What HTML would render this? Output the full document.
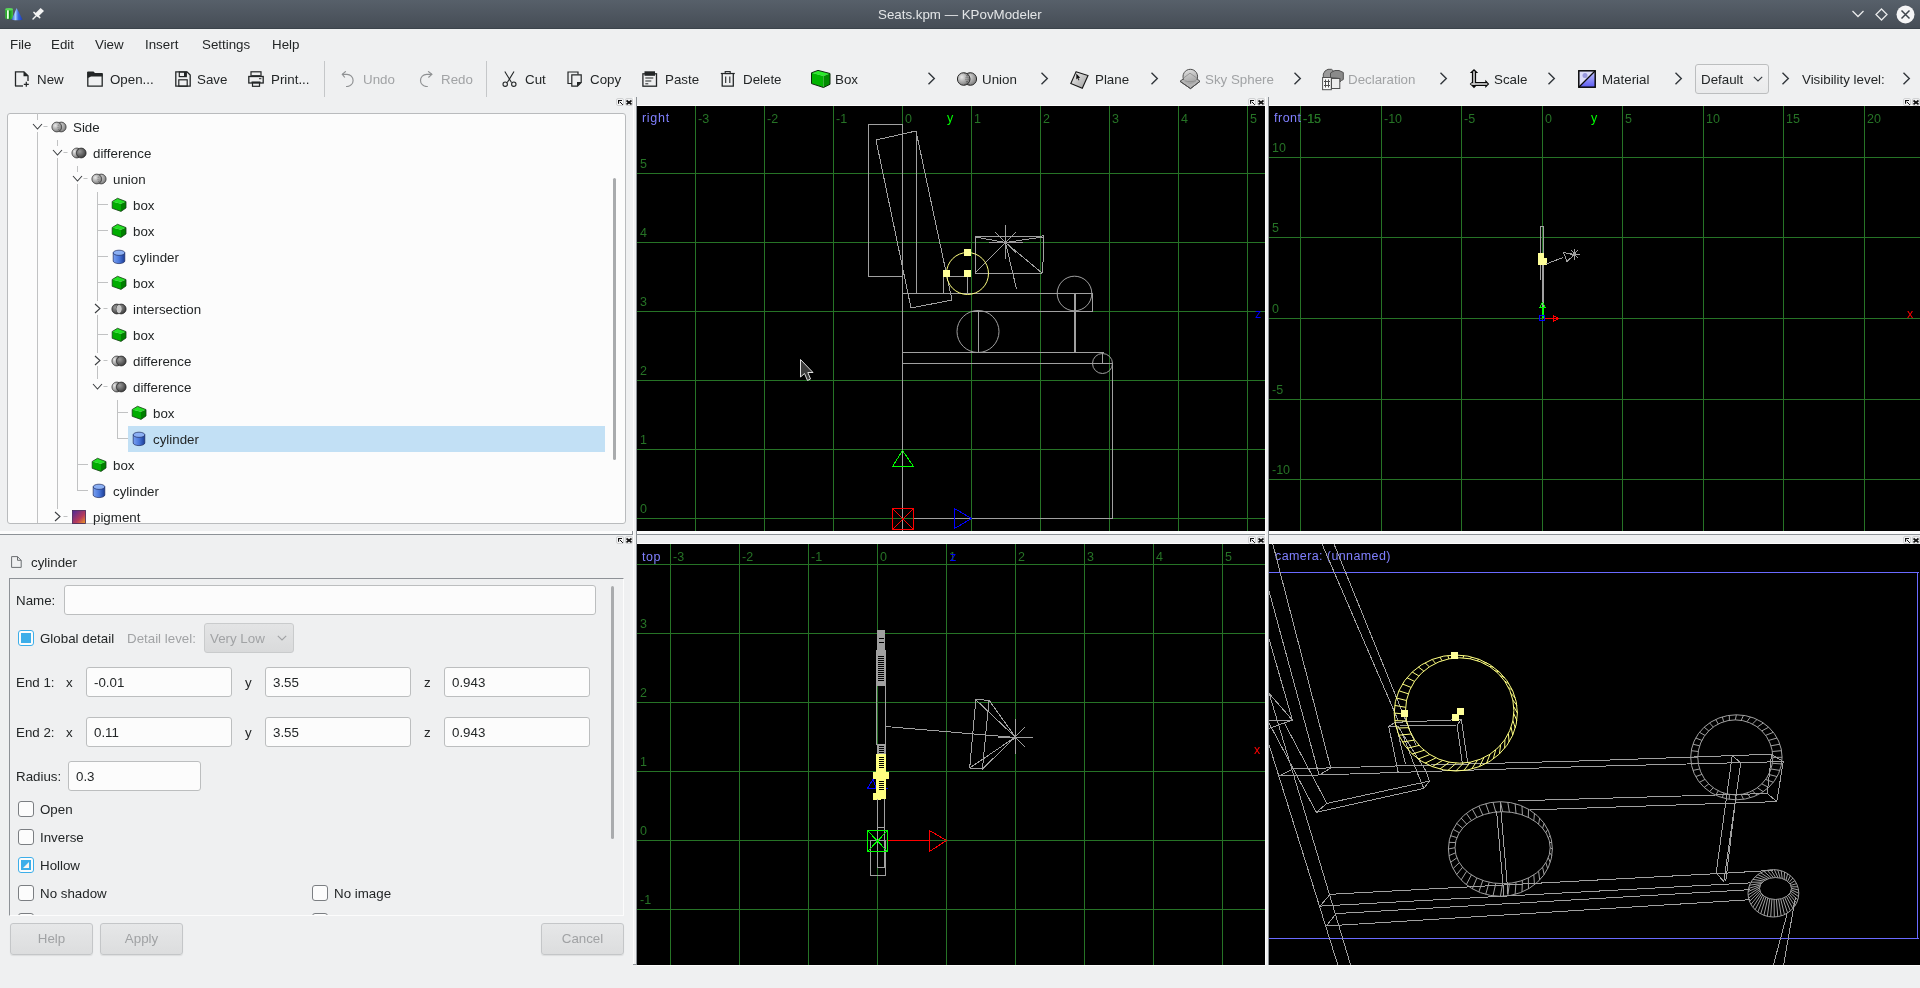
<!DOCTYPE html>
<html><head><meta charset="utf-8">
<style>
*{box-sizing:border-box;margin:0;padding:0}
html,body{width:1920px;height:988px;overflow:hidden;background:#eff0f1;font-family:"Liberation Sans",sans-serif;font-size:13.33px;color:#232627;position:relative}
.a{position:absolute}
#root{position:absolute;left:0;top:0;width:1920px;height:988px;will-change:transform}
.t{position:absolute;white-space:pre;line-height:16px}
#title{left:0;top:0;width:1920px;height:29px;background:linear-gradient(#57606a,#464d56 96%,#3b434b 96%)}
#title .t{color:#e3e5e7;font-size:13.33px}
.dis{color:#a1a3a5}
.vp{position:absolute;background:#000;overflow:hidden}
.vp svg{position:absolute;left:0;top:0}
.frame{position:absolute;border:1px solid #b9bbbd;border-radius:3px;background:#fcfcfc}
.inp{position:absolute;border:1px solid #bcbebf;border-radius:3px;background:#fcfcfc;height:29px}
.inp span{position:absolute;left:8px;top:6px;white-space:pre;line-height:16px}
.cb{position:absolute;width:16px;height:16px;border:1px solid #7b7e82;border-radius:3px;background:#fcfcfc}
.btn{position:absolute;border:1px solid #c4c6c8;border-radius:3px;background:linear-gradient(#e6e7e8,#dcddde);height:31px;color:#a0a2a4;text-align:center;line-height:29px;box-shadow:0 1px 1px rgba(0,0,0,0.08)}
.dockbtn{position:absolute;width:8px;height:8px}
.gl{font-family:"Liberation Sans",sans-serif;font-size:12px}
</style></head><body><div id="root">

<svg width="0" height="0" style="position:absolute">
<defs>
 <radialGradient id="gL" cx="0.35" cy="0.35" r="0.7"><stop offset="0" stop-color="#e8e8e8"/><stop offset="1" stop-color="#7a7a7a"/></radialGradient>
 <radialGradient id="gD" cx="0.35" cy="0.35" r="0.7"><stop offset="0" stop-color="#9a9a9a"/><stop offset="1" stop-color="#3a3a3a"/></radialGradient>
 <linearGradient id="gCyl" x1="0" x2="1"><stop offset="0" stop-color="#7aa0f0"/><stop offset="0.5" stop-color="#4a78dc"/><stop offset="1" stop-color="#1c3c94"/></linearGradient>
 <linearGradient id="gPig" x1="0" y1="0" x2="1" y2="1"><stop offset="0" stop-color="#4a2a9a"/><stop offset="0.6" stop-color="#b83a5a"/><stop offset="1" stop-color="#f0a020"/></linearGradient>
 <linearGradient id="gMat" x1="0" y1="0" x2="0" y2="1"><stop offset="0" stop-color="#c8c8ff"/><stop offset="1" stop-color="#5a5af0"/></linearGradient>
 <linearGradient id="gPlane" x1="0" y1="0" x2="1" y2="1"><stop offset="0" stop-color="#f4f4f4"/><stop offset="1" stop-color="#9a9a9a"/></linearGradient>
 <symbol id="i_box" viewBox="0 0 16 16">
  <path d="M1.2 4.5 L6.5 1.3 L15 4.6 L10 6.8 Z" fill="#22e022"/>
  <path d="M1.2 4.5 L10 6.8 L10 14.4 L1.2 11.3 Z" fill="#00ac00"/>
  <path d="M10 6.8 L15 4.6 L15 11 L10 14.4 Z" fill="#008000"/>
  <path d="M1.2 4.5 L6.5 1.3 L15 4.6 L15 11 L10 14.4 L1.2 11.3 Z" fill="none" stroke="#143c14" stroke-width="0.8"/>
 </symbol>
 <symbol id="i_cyl" viewBox="0 0 16 16">
  <path d="M2.2 3.8 L2.2 12 A5.8 2.6 0 0 0 13.8 12 L13.8 3.8 Z" fill="url(#gCyl)" stroke="#1a2a60" stroke-width="0.7"/>
  <ellipse cx="8" cy="3.8" rx="5.8" ry="2.6" fill="#8cb0f4" stroke="#1a2a60" stroke-width="0.7"/>
 </symbol>
 <symbol id="i_csg_u" viewBox="0 0 16 16">
  <circle cx="10.2" cy="8" r="4.9" fill="url(#gL)" stroke="#3a3a3a" stroke-width="0.8"/>
  <circle cx="5.8" cy="8" r="4.9" fill="url(#gL)" stroke="#3a3a3a" stroke-width="0.8"/>
  <path d="M10.2 3.4 A4.9 4.9 0 0 0 10.2 12.6" fill="none" stroke="#555" stroke-width="0.6" stroke-dasharray="1 1"/>
 </symbol>
 <symbol id="i_csg_d" viewBox="0 0 16 16">
  <circle cx="10.2" cy="8" r="4.9" fill="url(#gD)" stroke="#2a2a2a" stroke-width="0.8"/>
  <path d="M8 3.6 A4.9 4.9 0 1 0 8 12.4 A4.9 4.9 0 0 1 8 3.6 Z" fill="url(#gL)" stroke="#3a3a3a" stroke-width="0.8"/>
 </symbol>
 <symbol id="i_csg_i" viewBox="0 0 16 16">
  <circle cx="5.8" cy="8" r="4.9" fill="url(#gD)" stroke="#2a2a2a" stroke-width="0.8"/>
  <circle cx="10.2" cy="8" r="4.9" fill="url(#gD)" stroke="#2a2a2a" stroke-width="0.8"/>
  <path d="M8 3.6 A4.9 4.9 0 0 1 8 12.4 A4.9 4.9 0 0 1 8 3.6 Z" fill="#c8c8c8"/>
 </symbol>
 <symbol id="i_pig" viewBox="0 0 16 16">
  <rect x="1.5" y="1.5" width="13" height="13" fill="url(#gPig)" stroke="#402050" stroke-width="0.8"/>
 </symbol>
 <symbol id="chev" viewBox="0 0 8 13">
  <path d="M1 0.8 L6.8 6.5 L1 12.2" fill="none" stroke="#31363b" stroke-width="1.4"/>
 </symbol>
</defs></svg>

<!-- TITLE BAR -->
<div id="title" class="a">
  <div class="t" style="left:878px;top:7px">Seats.kpm — KPovModeler</div>
</div>

<!-- MENU -->
<div class="t" style="left:10px;top:37px">File</div>
<div class="t" style="left:51px;top:37px">Edit</div>
<div class="t" style="left:95px;top:37px">View</div>
<div class="t" style="left:145px;top:37px">Insert</div>
<div class="t" style="left:202px;top:37px">Settings</div>
<div class="t" style="left:272px;top:37px">Help</div>

<!-- TOOLBAR TEXT -->
<div class="t" style="left:37px;top:72px">New</div>
<div class="t" style="left:110px;top:72px">Open...</div>
<div class="t" style="left:197px;top:72px">Save</div>
<div class="t" style="left:271px;top:72px">Print...</div>
<div class="a" style="left:324px;top:61px;width:1px;height:36px;background:#c5c7c9"></div>
<div class="t dis" style="left:363px;top:72px">Undo</div>
<div class="t dis" style="left:441px;top:72px">Redo</div>
<div class="a" style="left:486px;top:61px;width:1px;height:36px;background:#c5c7c9"></div>
<div class="t" style="left:525px;top:72px">Cut</div>
<div class="t" style="left:590px;top:72px">Copy</div>
<div class="t" style="left:665px;top:72px">Paste</div>
<div class="t" style="left:743px;top:72px">Delete</div>
<div class="t" style="left:835px;top:72px">Box</div>
<div class="t" style="left:982px;top:72px">Union</div>
<div class="t" style="left:1095px;top:72px">Plane</div>
<div class="t dis" style="left:1205px;top:72px">Sky Sphere</div>
<div class="t dis" style="left:1348px;top:72px">Declaration</div>
<div class="t" style="left:1494px;top:72px">Scale</div>
<div class="t" style="left:1602px;top:72px">Material</div>
<div class="a" style="left:1695px;top:64px;width:74px;height:30px;border:1px solid #bcbebf;border-radius:3px;background:linear-gradient(#f3f3f4,#e9eaeb)"></div>
<div class="t" style="left:1701px;top:72px">Default</div>
<div class="t" style="left:1802px;top:72px">Visibility level:</div>

<!-- title icons -->
<svg class="a" style="left:4px;top:7px" width="20" height="15" viewBox="0 0 20 15">
 <defs><linearGradient id="gApC" x1="0" x2="1"><stop offset="0" stop-color="#3cb83c"/><stop offset="0.5" stop-color="#0a8a0a"/><stop offset="1" stop-color="#4cc04c"/></linearGradient>
 <linearGradient id="gApK" x1="0" x2="1"><stop offset="0" stop-color="#2a5ad8"/><stop offset="0.35" stop-color="#a8d0ff"/><stop offset="0.6" stop-color="#3a6ae0"/><stop offset="1" stop-color="#1a3ab8"/></linearGradient></defs>
 <path d="M1.2 2.3 L1.2 11 A3.9 1.3 0 0 0 9 11 L9 2.3 Z" fill="url(#gApC)"/>
 <ellipse cx="5.1" cy="2.3" rx="3.9" ry="1.2" fill="#5ad85a"/>
 <rect x="3" y="3.3" width="1.8" height="8.5" fill="#e8ffe8"/>
 <path d="M12.7 1 L18.4 12.2 A5.3 1.1 0 0 1 7.8 12.2 Z" fill="url(#gApK)"/>
</svg>
<svg class="a" style="left:32px;top:7px" width="13" height="14" viewBox="0 0 13 14">
 <path d="M8.6 1 L12 3.9 L5.8 10.1 L2.4 7.2 Z" fill="#f4f4f4"/>
 <path d="M1.9 5.4 L7.8 10.6" stroke="#f4f4f4" stroke-width="1.5" stroke-linecap="round"/>
 <path d="M4.5 8.5 L1 12" stroke="#f4f4f4" stroke-width="1.4" stroke-linecap="round"/>
</svg>
<svg class="a" style="left:1851px;top:9px" width="14" height="10" viewBox="0 0 14 10"><path d="M1.5 2 L7 7.5 L12.5 2" fill="none" stroke="#e8e9ea" stroke-width="1.3"/></svg>
<svg class="a" style="left:1875px;top:8px" width="13" height="13" viewBox="0 0 13 13"><path d="M6.5 1 L12 6.5 L6.5 12 L1 6.5 Z" fill="none" stroke="#e8e9ea" stroke-width="1.3"/></svg>
<svg class="a" style="left:1896px;top:5px" width="19" height="19" viewBox="0 0 19 19"><circle cx="9.5" cy="9.5" r="9" fill="#f5f5f6"/><path d="M5.5 5.5 L13.5 13.5 M13.5 5.5 L5.5 13.5" stroke="#3e444b" stroke-width="1.5"/></svg>

<!-- toolbar icons -->
<svg class="a" style="left:14px;top:71px" width="16" height="16" viewBox="0 0 16 16">
 <path d="M1.5 15 L1.5 0.8 L10 0.8 L14 4.8 L14 10" fill="none" stroke="#232627" stroke-width="1.3"/>
 <path d="M9.5 0.5 L14.3 5.3 L9.5 5.3 Z" fill="#232627"/>
 <path d="M1 15 L9 15" stroke="#232627" stroke-width="1.3"/>
 <path d="M12.3 10.8 L12.3 15.8 M9.8 13.3 L14.8 13.3" stroke="#232627" stroke-width="1.2"/>
</svg>
<svg class="a" style="left:87px;top:71px" width="16" height="16" viewBox="0 0 16 16">
 <path d="M0.5 0.5 L6.5 0.5 L8 2 L15.5 2 L15.5 5.5 L4 5.5 L1.5 6.8 L0.5 6.8 Z" fill="#232627"/>
 <path d="M0.8 1 L0.8 15.2 L15.2 15.2 L15.2 2.5" fill="none" stroke="#232627" stroke-width="1.3"/>
</svg>
<svg class="a" style="left:175px;top:71px" width="16" height="16" viewBox="0 0 16 16">
 <path d="M0.8 0.8 L12 0.8 L15.2 4 L15.2 15.2 L0.8 15.2 Z" fill="none" stroke="#232627" stroke-width="1.3"/>
 <rect x="4.3" y="1" width="7" height="4.6" fill="none" stroke="#232627" stroke-width="1.2"/>
 <rect x="9" y="1" width="2.2" height="4.3" fill="#232627"/>
 <rect x="3.8" y="8.8" width="8.4" height="6.4" fill="none" stroke="#232627" stroke-width="1.2"/>
</svg>
<svg class="a" style="left:248px;top:71px" width="16" height="16" viewBox="0 0 16 16">
 <rect x="3" y="0.8" width="10" height="4.5" fill="none" stroke="#232627" stroke-width="1.2"/>
 <rect x="3.5" y="4.2" width="9" height="1.3" fill="#232627"/>
 <rect x="0.8" y="5.5" width="14.4" height="6.5" fill="none" stroke="#232627" stroke-width="1.3"/>
 <rect x="11" y="7.2" width="2.4" height="1" fill="#232627"/>
 <rect x="3.5" y="10.5" width="9" height="1.4" fill="#232627"/>
 <rect x="4.5" y="11.5" width="7" height="3.8" fill="none" stroke="#232627" stroke-width="1.2"/>
</svg>
<svg class="a" style="left:340px;top:71px" width="16" height="16" viewBox="0 0 16 16">
 <path d="M2.3 3.3 L7 3.3 A6.1 6.1 0 0 1 7 15.5 L6 15.5" fill="none" stroke="#8f9193" stroke-width="1.15"/>
 <path d="M5.8 0.3 L2.3 3.3 L4.8 6.5" fill="none" stroke="#8f9193" stroke-width="1.15"/>
</svg>
<svg class="a" style="left:418px;top:71px" width="16" height="16" viewBox="0 0 16 16">
 <path d="M13.9 3.3 L8.6 3.3 A6.1 6.1 0 0 0 8.6 15.5 L9.8 15.5" fill="none" stroke="#8f9193" stroke-width="1.15"/>
 <path d="M10.1 0.3 L13.9 3.3 L10.4 6.5" fill="none" stroke="#8f9193" stroke-width="1.15"/>
</svg>
<svg class="a" style="left:502px;top:71px" width="16" height="16" viewBox="0 0 16 16">
 <path d="M2.8 0.5 L9.5 11.5 M12 0.5 L5.3 11.5" stroke="#232627" stroke-width="1.1"/>
 <circle cx="3.2" cy="13.2" r="2.2" fill="none" stroke="#232627" stroke-width="1.1"/>
 <circle cx="11.8" cy="13.2" r="2.2" fill="none" stroke="#232627" stroke-width="1.1"/>
</svg>
<svg class="a" style="left:567px;top:71px" width="16" height="16" viewBox="0 0 16 16">
 <path d="M5 12.5 L1 12.5 L1 1 L11 1 L11 3.5" fill="none" stroke="#232627" stroke-width="1.2"/>
 <path d="M4.8 3.8 L14.2 3.8 L14.2 11.5 L10.5 15.2 L4.8 15.2 Z" fill="none" stroke="#232627" stroke-width="1.2"/>
 <path d="M14.5 11 L10 15.5 L10 11 Z" fill="#232627"/>
</svg>
<svg class="a" style="left:642px;top:71px" width="16" height="16" viewBox="0 0 16 16">
 <rect x="0.9" y="2.8" width="13.6" height="12.4" fill="none" stroke="#232627" stroke-width="1.3"/>
 <rect x="2.5" y="0.3" width="10.5" height="4.5" fill="#232627"/>
 <rect x="3.3" y="6.5" width="8" height="1" fill="#232627"/><rect x="3.3" y="9.5" width="6" height="1" fill="#232627"/><rect x="3.3" y="12.3" width="3" height="1" fill="#232627"/>
</svg>
<svg class="a" style="left:720px;top:71px" width="16" height="16" viewBox="0 0 16 16">
 <path d="M0.8 2.5 L14.8 2.5" stroke="#232627" stroke-width="1.2"/>
 <rect x="5.2" y="0.6" width="5" height="2" fill="none" stroke="#232627" stroke-width="1.1"/>
 <path d="M2.2 2.5 L2.2 15.2 L13.3 15.2 L13.3 2.5" fill="none" stroke="#232627" stroke-width="1.3"/>
 <path d="M5.7 5.5 L5.7 12 M9.8 5.5 L9.8 12" stroke="#232627" stroke-width="1.1"/>
</svg>
<svg class="a" style="left:811px;top:70px" width="20" height="18" viewBox="0 0 20 18">
 <path d="M0.5 2.8 L7 0.4 L19 3.5 L12.5 6 Z" fill="#2aea2a"/>
 <path d="M0.5 2.8 L12.5 6 L12.5 17.5 L0.5 13.6 Z" fill="#00b400"/>
 <path d="M12.5 6 L19 3.5 L19 14.3 L12.5 17.5 Z" fill="#008c00"/>
 <path d="M0.5 2.8 L7 0.4 L19 3.5 L19 14.3 L12.5 17.5 L0.5 13.6 Z" fill="none" stroke="#0c2a0c" stroke-width="1"/>
</svg>
<svg class="a" style="left:957px;top:72px" width="20" height="14" viewBox="0 0 20 14">
 <circle cx="13.3" cy="7" r="6.3" fill="url(#gL)" stroke="#2a2a2a" stroke-width="1"/>
 <circle cx="6.7" cy="7" r="6.3" fill="url(#gL)" stroke="#2a2a2a" stroke-width="1"/>
 <path d="M13.3 1 A6.3 6.3 0 0 0 13.3 13" fill="none" stroke="#444" stroke-width="0.7" stroke-dasharray="1 1"/>
 <path d="M6.7 1 A6.3 6.3 0 0 1 6.7 13" fill="none" stroke="#444" stroke-width="0.7" stroke-dasharray="1 1"/>
</svg>
<svg class="a" style="left:1070px;top:71px" width="20" height="18" viewBox="0 0 20 18">
 <path d="M6 0.8 L18 4.5 L12.3 17.2 L0.8 12.5 Z" fill="url(#gPlane)" stroke="#151515" stroke-width="1.1"/>
 <path d="M6.3 2.5 L6.3 8.5 L7.6 7.3 L8.6 9.5 L9.4 9.1 L8.4 7 L10.2 6.8 Z" fill="#111"/>
</svg>
<svg class="a" style="left:1176px;top:66px" width="28" height="26" viewBox="0 0 28 26">
 <defs><linearGradient id="gSky" x1="0" y1="0" x2="0.3" y2="1"><stop offset="0" stop-color="#e4e4e4"/><stop offset="1" stop-color="#a4a4a4"/></linearGradient></defs>
 <path d="M4 15.3 L14.5 7.5 L24 15.3 L14.5 22.6 Z" fill="#b4b4b4" stroke="#4c4c4c" stroke-width="1"/>
 <circle cx="14.3" cy="10.6" r="7.3" fill="url(#gSky)"/><path d="M7.68 13.68 A7.3 7.3 0 1 1 20.92 13.68" fill="none" stroke="#4c4c4c" stroke-width="1"/>
 <path d="M7.2 12.3 L14 7.2 L20.8 12" fill="none" stroke="#8a8a8a" stroke-width="0.8"/>
 <path d="M8.5 14.7 L11.5 15.5 L17 15.5 L20 14.7" fill="none" stroke="#8e8e8e" stroke-width="0.8"/>
 <path d="M4 15.3 L14.5 22.6 L24 15.3" fill="none" stroke="#4c4c4c" stroke-width="1"/>
</svg>
<svg class="a" style="left:1318px;top:66px" width="28" height="26" viewBox="0 0 28 26">
 <path d="M5.3 11.5 L5.3 8 L7 5 L10 3.3 L13.5 3.3 L16 5.5 L12.5 8 L12.5 11.5 Z" fill="#9a9a9a" stroke="#505050" stroke-width="1"/>
 <path d="M12.5 11.5 L12.5 7 L14 6 L17 4.5 L21 4.5 L25.3 6.5 L25.3 13.5 L23.5 14.5 L21.8 16 L21.8 12.5 Z" fill="#8a8a8a" stroke="#505050" stroke-width="1"/>
 <rect x="4.6" y="11.5" width="8.7" height="12.2" fill="#fafafa" stroke="#505050" stroke-width="1"/>
 <path d="M7.5 13.5 L7.5 21.5 M10.5 13.5 L10.5 21.5 M6 15.5 L12 15.5 M6 19.5 L12 19.5" stroke="#505050" stroke-width="1"/>
 <rect x="13.5" y="12.5" width="8.3" height="10" fill="#ececec" stroke="#505050" stroke-width="1"/>
</svg>
<svg class="a" style="left:1469px;top:69px" width="21" height="21" viewBox="0 0 21 21">
 <defs><linearGradient id="gSc" x1="0" x2="1"><stop offset="0" stop-color="#e8e8e8"/><stop offset="1" stop-color="#9c9c9c"/></linearGradient></defs>
 <path d="M5 0 L9.2 3.9 L7.1 3.9 L7.1 12.9 L16.3 12.9 L16.3 10.8 L20.2 15 L16.3 19.1 L16.3 17.1 L7.1 17.1 L5 19.3 L2.9 17.1 L0.7 15 L2.9 12.9 L2.9 3.9 L0.8 3.9 Z" fill="#080808"/>
 <path d="M5 2.2 L5 16" stroke="#c4c4c4" stroke-width="1.8"/>
 <path d="M2.3 15 L18.3 15" stroke="#c8c8c8" stroke-width="1.8"/>
</svg>
<svg class="a" style="left:1578px;top:70px" width="18" height="18" viewBox="0 0 18 18">
 <rect x="0.8" y="0.8" width="16.4" height="16.4" fill="url(#gMat)"/>
 <path d="M0.8 0.8 L17 0.8 L0.8 17 Z" fill="#dcdcfa"/>
 <circle cx="7" cy="5.5" r="2.5" fill="#7a7ad0" opacity="0.7"/>
 <path d="M1 17 L17 1" stroke="#0a0a0a" stroke-width="1.2"/>
 <rect x="0.8" y="0.8" width="16.4" height="16.4" fill="none" stroke="#0a0a0a" stroke-width="1.5"/>
</svg>
<svg class="a" style="left:927px;top:72px" width="9" height="13"><use href="#chev"/></svg>
<svg class="a" style="left:1040px;top:72px" width="9" height="13"><use href="#chev"/></svg>
<svg class="a" style="left:1150px;top:72px" width="9" height="13"><use href="#chev"/></svg>
<svg class="a" style="left:1293px;top:72px" width="9" height="13"><use href="#chev"/></svg>
<svg class="a" style="left:1439px;top:72px" width="9" height="13"><use href="#chev"/></svg>
<svg class="a" style="left:1547px;top:72px" width="9" height="13"><use href="#chev"/></svg>
<svg class="a" style="left:1674px;top:72px" width="9" height="13"><use href="#chev"/></svg>
<svg class="a" style="left:1781px;top:72px" width="9" height="13"><use href="#chev"/></svg>
<svg class="a" style="left:1902px;top:72px" width="9" height="13"><use href="#chev"/></svg>
<svg class="a" style="left:1753px;top:76px" width="10" height="6" viewBox="0 0 10 6"><path d="M0.8 0.8 L5 5 L9.2 0.8" fill="none" stroke="#31363b" stroke-width="1.1"/></svg>

<!-- LEFT DOCK: tree -->
<div class="frame" style="left:7px;top:113px;width:619px;height:411px"></div>

<!-- separators -->
<div class="a" style="left:633px;top:97px;width:1px;height:868px;background:#fcfcfc"></div>
<div class="a" style="left:636px;top:97px;width:1px;height:868px;background:#8d9297"></div>
<div class="a" style="left:1265px;top:97px;width:1px;height:868px;background:#fcfcfc"></div>
<div class="a" style="left:1268px;top:97px;width:1px;height:868px;background:#8d9297"></div>
<div class="a" style="left:0px;top:531px;width:633px;height:3px;background:#fcfcfc"></div>
<div class="a" style="left:0px;top:534px;width:633px;height:1px;background:#8d9297"></div><div class="a" style="left:632px;top:531px;width:1px;height:3px;background:#8d9297"></div>
<div class="a" style="left:637px;top:531px;width:628px;height:3px;background:#fcfcfc"></div>
<div class="a" style="left:637px;top:534px;width:628px;height:1px;background:#8d9297"></div>
<div class="a" style="left:1269px;top:531px;width:651px;height:3px;background:#fcfcfc"></div>
<div class="a" style="left:1269px;top:534px;width:651px;height:1px;background:#8d9297"></div>
<div class="a" style="left:637px;top:105px;width:628px;height:1px;background:#fcfcfc"></div><div class="a" style="left:1269px;top:105px;width:651px;height:1px;background:#fcfcfc"></div>
<div class="a" style="left:637px;top:543px;width:628px;height:1px;background:#fcfcfc"></div><div class="a" style="left:1269px;top:543px;width:651px;height:1px;background:#fcfcfc"></div>
<div class="a" style="left:637px;top:965px;width:628px;height:1px;background:#fcfcfc"></div><div class="a" style="left:1269px;top:965px;width:651px;height:1px;background:#fcfcfc"></div><div class="a" style="left:633px;top:964px;width:4px;height:1px;background:#8d9297"></div>

<!-- VIEWPORTS -->
<div class="vp" id="vpR" style="left:637px;top:106px;width:628px;height:425px"></div>
<div class="vp" id="vpF" style="left:1269px;top:106px;width:651px;height:425px"></div>
<div class="vp" id="vpT" style="left:637px;top:544px;width:628px;height:421px"></div>
<div class="vp" id="vpC" style="left:1269px;top:544px;width:651px;height:421px"></div>

<!-- dock buttons -->
<svg width="0" height="0" style="position:absolute"><defs>
<symbol id="dfloat" viewBox="0 0 8 8"><rect x="0.5" y="0.5" width="7" height="7" rx="1.5" fill="#f4f4f5" stroke="#c8c9ca" stroke-width="0.8"/><path d="M2 2 L6 2 L6 3.1 L3.1 3.1 L3.1 5.8 L2 5.8 Z" fill="#111"/><path d="M3.8 3.8 L6.9 6.9" stroke="#111" stroke-width="1"/></symbol>
<symbol id="dclose" viewBox="0 0 8 8"><rect x="0.5" y="0.5" width="7" height="7" rx="1.5" fill="#f4f4f5" stroke="#c8c9ca" stroke-width="0.8"/><path d="M1.5 2.5 L6.5 6.4 M6.5 2.5 L1.5 6.4" stroke="#111" stroke-width="1.7"/></symbol>
</defs></svg>
<svg class="a" style="left:616px;top:98px" width="8" height="8"><use href="#dfloat"/></svg>
<svg class="a" style="left:625px;top:98px" width="8" height="8"><use href="#dclose"/></svg>
<svg class="a" style="left:1248px;top:98px" width="8" height="8"><use href="#dfloat"/></svg>
<svg class="a" style="left:1257px;top:98px" width="8" height="8"><use href="#dclose"/></svg>
<svg class="a" style="left:1903px;top:98px" width="8" height="8"><use href="#dfloat"/></svg>
<svg class="a" style="left:1912px;top:98px" width="8" height="8"><use href="#dclose"/></svg>
<svg class="a" style="left:616px;top:536px" width="8" height="8"><use href="#dfloat"/></svg>
<svg class="a" style="left:625px;top:536px" width="8" height="8"><use href="#dclose"/></svg>
<svg class="a" style="left:1248px;top:536px" width="8" height="8"><use href="#dfloat"/></svg>
<svg class="a" style="left:1257px;top:536px" width="8" height="8"><use href="#dclose"/></svg>
<svg class="a" style="left:1903px;top:536px" width="8" height="8"><use href="#dfloat"/></svg>
<svg class="a" style="left:1912px;top:536px" width="8" height="8"><use href="#dclose"/></svg>

<!-- properties header -->
<svg class="a" style="left:11px;top:556px" width="11" height="12" viewBox="0 0 11 12"><path d="M0.6 0.6 L6.5 0.6 L10.2 4.3 L10.2 11.4 L0.6 11.4 Z M6.5 0.6 L6.5 4.3 L10.2 4.3" fill="none" stroke="#6b6e71" stroke-width="1"/></svg>
<div class="t" style="left:31px;top:555px">cylinder</div>
<!-- frame -->
<div class="a" style="left:9px;top:578px;width:615px;height:338px;border-top:1px solid #8e9297;border-left:1px solid #8e9297;border-right:1px solid #fcfcfc;border-bottom:1px solid #fcfcfc"></div>
<div class="t" style="left:16px;top:593px">Name:</div>
<div class="inp" style="left:64px;top:585px;width:532px;height:30px"></div>
<div class="cb" style="left:18px;top:630px;border-color:#3daee9"><div class="a" style="left:2px;top:2px;width:10px;height:10px;background:#3daee9"></div></div>
<div class="t" style="left:40px;top:631px">Global detail</div>
<div class="t dis" style="left:127px;top:631px">Detail level:</div>
<div class="a" style="left:204px;top:623px;width:90px;height:30px;border:1px solid #c9cbcc;border-radius:3px;background:linear-gradient(#e3e4e5,#d9dadb)"></div>
<div class="t dis" style="left:210px;top:631px">Very Low</div>
<svg class="a" style="left:277px;top:635px" width="10" height="6" viewBox="0 0 10 6"><path d="M0.8 0.8 L5 5 L9.2 0.8" fill="none" stroke="#a0a2a4" stroke-width="1.1"/></svg>

<div class="t" style="left:16px;top:675px">End 1:</div>
<div class="t" style="left:66px;top:675px">x</div>
<div class="inp" style="left:86px;top:667px;width:146px;height:30px"><span style="left:7px;top:7px">-0.01</span></div>
<div class="t" style="left:245px;top:675px">y</div>
<div class="inp" style="left:265px;top:667px;width:146px;height:30px"><span style="left:7px;top:7px">3.55</span></div>
<div class="t" style="left:424px;top:675px">z</div>
<div class="inp" style="left:444px;top:667px;width:146px;height:30px"><span style="left:7px;top:7px">0.943</span></div>

<div class="t" style="left:16px;top:725px">End 2:</div>
<div class="t" style="left:66px;top:725px">x</div>
<div class="inp" style="left:86px;top:717px;width:146px;height:30px"><span style="left:7px;top:7px">0.11</span></div>
<div class="t" style="left:245px;top:725px">y</div>
<div class="inp" style="left:265px;top:717px;width:146px;height:30px"><span style="left:7px;top:7px">3.55</span></div>
<div class="t" style="left:424px;top:725px">z</div>
<div class="inp" style="left:444px;top:717px;width:146px;height:30px"><span style="left:7px;top:7px">0.943</span></div>

<div class="t" style="left:16px;top:769px">Radius:</div>
<div class="inp" style="left:68px;top:761px;width:133px;height:30px"><span style="left:7px;top:7px">0.3</span></div>

<div class="cb" style="left:18px;top:801px"></div><div class="t" style="left:40px;top:802px">Open</div>
<div class="cb" style="left:18px;top:829px"></div><div class="t" style="left:40px;top:830px">Inverse</div>
<div class="cb" style="left:18px;top:857px;border-color:#3daee9"><svg class="a" style="left:2px;top:2px" width="10" height="10" viewBox="0 0 10 10"><rect width="10" height="10" fill="#3daee9"/><path d="M2 8 L8 2 L8 8 Z" fill="#fcf6f0"/></svg></div><div class="t" style="left:40px;top:858px">Hollow</div>
<div class="cb" style="left:18px;top:885px"></div><div class="t" style="left:40px;top:886px">No shadow</div>
<div class="cb" style="left:312px;top:885px"></div><div class="t" style="left:334px;top:886px">No image</div>
<div class="a" style="left:10px;top:913px;width:613px;height:2px;overflow:hidden"><div class="cb" style="left:8px;top:0px"></div><div class="cb" style="left:302px;top:0px"></div></div>
<div class="a" style="left:611px;top:586px;width:3px;height:253px;border-radius:2px;background:#a9abad"></div>

<div class="btn" style="left:10px;top:923px;width:83px;height:32px">Help</div>
<div class="btn" style="left:100px;top:923px;width:83px;height:32px">Apply</div>
<div class="btn" style="left:541px;top:923px;width:83px;height:32px">Cancel</div>

<div class="a" style="left:128px;top:426px;width:477px;height:26px;background:#c2e0f5"></div>
<svg class="a" style="left:7px;top:113px" width="619" height="411" viewBox="7 113 619 411">
<rect x="37" y="113" width="1" height="7" fill="#c1c2c3"/>
<rect x="37" y="132" width="1" height="391" fill="#c1c2c3"/>
<rect x="57" y="140" width="1" height="6" fill="#c1c2c3"/>
<rect x="57" y="158" width="1" height="351" fill="#c1c2c3"/>
<rect x="77" y="166" width="1" height="6" fill="#c1c2c3"/>
<rect x="77" y="184" width="1" height="307" fill="#c1c2c3"/>
<rect x="78" y="490" width="10" height="1" fill="#c1c2c3"/>
<rect x="97" y="192" width="1" height="109" fill="#c1c2c3"/>
<rect x="97" y="315" width="1" height="38" fill="#c1c2c3"/>
<rect x="97" y="366" width="1" height="13" fill="#c1c2c3"/>
<rect x="98" y="204" width="10" height="1" fill="#c1c2c3"/>
<rect x="98" y="230" width="10" height="1" fill="#c1c2c3"/>
<rect x="98" y="256" width="10" height="1" fill="#c1c2c3"/>
<rect x="98" y="282" width="10" height="1" fill="#c1c2c3"/>
<rect x="98" y="334" width="10" height="1" fill="#c1c2c3"/>
<rect x="117" y="400" width="1" height="39" fill="#c1c2c3"/>
<rect x="118" y="412" width="10" height="1" fill="#c1c2c3"/>
<rect x="118" y="438" width="10" height="1" fill="#c1c2c3"/>
<rect x="78" y="464" width="10" height="1" fill="#c1c2c3"/>
<path d="M33.0 124.0 L37.5 129.0 L42.0 124.0" fill="none" stroke="#3b3e41" stroke-width="1.1"/>
<rect x="43.5" y="126" width="4" height="1" fill="#c1c2c3"/>
<path d="M53.0 150.0 L57.5 155.0 L62.0 150.0" fill="none" stroke="#3b3e41" stroke-width="1.1"/>
<rect x="63.5" y="152" width="4" height="1" fill="#c1c2c3"/>
<path d="M73.0 176.0 L77.5 181.0 L82.0 176.0" fill="none" stroke="#3b3e41" stroke-width="1.1"/>
<rect x="83.5" y="178" width="4" height="1" fill="#c1c2c3"/>
<path d="M95.0 304.0 L100.0 308.5 L95.0 313.0" fill="none" stroke="#3b3e41" stroke-width="1.1"/>
<rect x="103.5" y="308" width="4" height="1" fill="#c1c2c3"/>
<path d="M95.0 356.0 L100.0 360.5 L95.0 365.0" fill="none" stroke="#3b3e41" stroke-width="1.1"/>
<rect x="103.5" y="360" width="4" height="1" fill="#c1c2c3"/>
<path d="M93.0 384.0 L97.5 389.0 L102.0 384.0" fill="none" stroke="#3b3e41" stroke-width="1.1"/>
<rect x="103.5" y="386" width="4" height="1" fill="#c1c2c3"/>
<path d="M55.0 512.0 L60.0 516.5 L55.0 521.0" fill="none" stroke="#3b3e41" stroke-width="1.1"/>
<rect x="63.5" y="516" width="4" height="1" fill="#c1c2c3"/>
</svg>
<svg class="a" style="left:51px;top:119px" width="16" height="16"><use href="#i_csg_u"/></svg>
<div class="t" style="left:73px;top:120px">Side</div>
<svg class="a" style="left:71px;top:145px" width="16" height="16"><use href="#i_csg_d"/></svg>
<div class="t" style="left:93px;top:146px">difference</div>
<svg class="a" style="left:91px;top:171px" width="16" height="16"><use href="#i_csg_u"/></svg>
<div class="t" style="left:113px;top:172px">union</div>
<svg class="a" style="left:111px;top:197px" width="16" height="16"><use href="#i_box"/></svg>
<div class="t" style="left:133px;top:198px">box</div>
<svg class="a" style="left:111px;top:223px" width="16" height="16"><use href="#i_box"/></svg>
<div class="t" style="left:133px;top:224px">box</div>
<svg class="a" style="left:111px;top:249px" width="16" height="16"><use href="#i_cyl"/></svg>
<div class="t" style="left:133px;top:250px">cylinder</div>
<svg class="a" style="left:111px;top:275px" width="16" height="16"><use href="#i_box"/></svg>
<div class="t" style="left:133px;top:276px">box</div>
<svg class="a" style="left:111px;top:301px" width="16" height="16"><use href="#i_csg_i"/></svg>
<div class="t" style="left:133px;top:302px">intersection</div>
<svg class="a" style="left:111px;top:327px" width="16" height="16"><use href="#i_box"/></svg>
<div class="t" style="left:133px;top:328px">box</div>
<svg class="a" style="left:111px;top:353px" width="16" height="16"><use href="#i_csg_d"/></svg>
<div class="t" style="left:133px;top:354px">difference</div>
<svg class="a" style="left:111px;top:379px" width="16" height="16"><use href="#i_csg_d"/></svg>
<div class="t" style="left:133px;top:380px">difference</div>
<svg class="a" style="left:131px;top:405px" width="16" height="16"><use href="#i_box"/></svg>
<div class="t" style="left:153px;top:406px">box</div>
<svg class="a" style="left:131px;top:431px" width="16" height="16"><use href="#i_cyl"/></svg>
<div class="t" style="left:153px;top:432px">cylinder</div>
<svg class="a" style="left:91px;top:457px" width="16" height="16"><use href="#i_box"/></svg>
<div class="t" style="left:113px;top:458px">box</div>
<svg class="a" style="left:91px;top:483px" width="16" height="16"><use href="#i_cyl"/></svg>
<div class="t" style="left:113px;top:484px">cylinder</div>
<svg class="a" style="left:71px;top:509px" width="16" height="16"><use href="#i_pig"/></svg>
<div class="t" style="left:93px;top:510px">pigment</div>
<div class="a" style="left:613px;top:178px;width:3px;height:282px;border-radius:2px;background:#a9abad"></div>
<div class="vp" style="left:637px;top:106px;width:628px;height:425px"><svg width="628" height="425" viewBox="637 106 628 425" shape-rendering="crispEdges">
<rect x="695" y="106" width="1" height="425" fill="#267326"/>
<rect x="764" y="106" width="1" height="425" fill="#267326"/>
<rect x="833" y="106" width="1" height="425" fill="#267326"/>
<rect x="902" y="106" width="1" height="425" fill="#267326"/>
<rect x="971" y="106" width="1" height="425" fill="#267326"/>
<rect x="1040" y="106" width="1" height="425" fill="#267326"/>
<rect x="1109" y="106" width="1" height="425" fill="#267326"/>
<rect x="1178" y="106" width="1" height="425" fill="#267326"/>
<rect x="1247" y="106" width="1" height="425" fill="#267326"/>
<rect x="637" y="518" width="628" height="1" fill="#267326"/>
<rect x="637" y="449" width="628" height="1" fill="#267326"/>
<rect x="637" y="380" width="628" height="1" fill="#267326"/>
<rect x="637" y="311" width="628" height="1" fill="#267326"/>
<rect x="637" y="242" width="628" height="1" fill="#267326"/>
<rect x="637" y="173" width="628" height="1" fill="#267326"/>
<text x="698" y="123" fill="#267326" font-family="Liberation Sans" font-size="12.5" >-3</text>
<text x="767" y="123" fill="#267326" font-family="Liberation Sans" font-size="12.5" >-2</text>
<text x="836" y="123" fill="#267326" font-family="Liberation Sans" font-size="12.5" >-1</text>
<text x="905" y="123" fill="#267326" font-family="Liberation Sans" font-size="12.5" >0</text>
<text x="974" y="123" fill="#267326" font-family="Liberation Sans" font-size="12.5" >1</text>
<text x="1043" y="123" fill="#267326" font-family="Liberation Sans" font-size="12.5" >2</text>
<text x="1112" y="123" fill="#267326" font-family="Liberation Sans" font-size="12.5" >3</text>
<text x="1181" y="123" fill="#267326" font-family="Liberation Sans" font-size="12.5" >4</text>
<text x="1250" y="123" fill="#267326" font-family="Liberation Sans" font-size="12.5" >5</text>
<text x="640" y="513" fill="#267326" font-family="Liberation Sans" font-size="12.5" >0</text>
<text x="640" y="444" fill="#267326" font-family="Liberation Sans" font-size="12.5" >1</text>
<text x="640" y="375" fill="#267326" font-family="Liberation Sans" font-size="12.5" >2</text>
<text x="640" y="306" fill="#267326" font-family="Liberation Sans" font-size="12.5" >3</text>
<text x="640" y="237" fill="#267326" font-family="Liberation Sans" font-size="12.5" >4</text>
<text x="640" y="168" fill="#267326" font-family="Liberation Sans" font-size="12.5" >5</text>
<text x="642" y="122" fill="#8080ff" font-family="Liberation Sans" font-size="12.5" font-size="13.5" letter-spacing="0.7">right</text>
<text x="947" y="122" fill="#00ff00" font-family="Liberation Sans" font-size="12.5" >y</text>
<text x="1255" y="318" fill="#0000ff" font-family="Liberation Sans" font-size="12.5" >z</text>
<polyline points="868.5,276.5 868.5,124.5 902.5,124.5" fill="none" stroke="#a0a0a0" stroke-width="1"/>
<rect x="868" y="276" width="35" height="1" fill="#a0a0a0"/>
<rect x="902" y="124" width="1" height="407" fill="#a0a0a0"/>
<polygon points="876,140 916,131 952,300 911,308" fill="none" stroke="#a0a0a0" stroke-width="1"/>
<rect x="916" y="131" width="1" height="163" fill="#a0a0a0"/>
<rect x="902" y="293" width="191" height="1" fill="#a0a0a0"/>
<rect x="972" y="311" width="121" height="1" fill="#a0a0a0"/>
<rect x="1092" y="293" width="1" height="19" fill="#a0a0a0"/>
<circle cx="1074.5" cy="293.5" r="17.3" fill="none" stroke="#a0a0a0" stroke-width="1" shape-rendering="auto"/>
<rect x="1074" y="293" width="2" height="60" fill="#a0a0a0"/>
<rect x="943" y="276" width="25" height="1" fill="#a0a0a0"/>
<rect x="943" y="276" width="1" height="18" fill="#a0a0a0"/>
<rect x="967" y="276" width="1" height="18" fill="#a0a0a0"/>
<circle cx="978" cy="331.5" r="21" fill="none" stroke="#a0a0a0" stroke-width="1" shape-rendering="auto"/>
<rect x="978" y="311" width="1" height="42" fill="#a0a0a0"/>
<rect x="902" y="352" width="202" height="1" fill="#a0a0a0"/>
<rect x="902" y="363" width="211" height="1" fill="#a0a0a0"/>
<circle cx="1102.5" cy="363.5" r="10" fill="none" stroke="#a0a0a0" stroke-width="1" shape-rendering="auto"/>
<rect x="1102" y="352" width="1" height="12" fill="#a0a0a0"/>
<rect x="1112" y="363" width="1" height="156" fill="#a0a0a0"/>
<rect x="913" y="518" width="200" height="1" fill="#a0a0a0"/>
<polygon points="975,237 1043,236 1043,262 1042,273 975,273" fill="none" stroke="#a0a0a0" stroke-width="1"/>
<line x1="1005.5" y1="242.5" x2="975" y2="273" stroke="#a0a0a0" stroke-width="1"/>
<line x1="1005.5" y1="242.5" x2="1042" y2="273" stroke="#a0a0a0" stroke-width="1"/>
<line x1="1005.5" y1="242.5" x2="975" y2="237" stroke="#a0a0a0" stroke-width="1"/>
<line x1="1005.5" y1="242.5" x2="1043" y2="237" stroke="#a0a0a0" stroke-width="1"/>
<line x1="1005.5" y1="242.5" x2="1016.5" y2="289" stroke="#a0a0a0" stroke-width="1"/>
<line x1="1005.5" y1="225" x2="1005.5" y2="259" stroke="#a0a0a0" stroke-width="1"/>
<line x1="989" y1="242.5" x2="1023" y2="242.5" stroke="#a0a0a0" stroke-width="1"/>
<line x1="995" y1="232" x2="1016" y2="253" stroke="#a0a0a0" stroke-width="1"/>
<line x1="1016" y1="232" x2="995" y2="253" stroke="#a0a0a0" stroke-width="1"/>
<circle cx="967.5" cy="273.5" r="21" fill="none" stroke="#ffff80" stroke-width="1" shape-rendering="auto"/>
<rect x="964" y="249" width="7" height="7" fill="#ffff99"/>
<rect x="943" y="270" width="7" height="7" fill="#ffff99"/>
<rect x="964" y="270" width="7" height="7" fill="#ffff99"/>
<polygon points="902.5,450.5 892.5,466.5 913.5,466.5" fill="none" stroke="#00ff00" stroke-width="1"/>
<rect x="892.5" y="508.5" width="21" height="21" fill="none" stroke="#ff0000"/>
<line x1="892.5" y1="508.5" x2="913.5" y2="529.5" stroke="#ff0000" stroke-width="1"/>
<line x1="913.5" y1="508.5" x2="892.5" y2="529.5" stroke="#ff0000" stroke-width="1"/>
<polygon points="954.5,508.5 954.5,528.5 971.5,518.5" fill="none" stroke="#0000ff" stroke-width="1"/>
<path d="M800.5 359.5 L800.5 377 L804.5 373.5 L807.5 380.5 L810.5 379 L807.8 372.5 L813 372.5 Z" fill="#3c3c3c" stroke="#e0e0e0" stroke-width="1" shape-rendering="auto"/>
</svg></div>
<div class="vp" style="left:1269px;top:106px;width:651px;height:425px"><svg width="651" height="425" viewBox="1269 106 651 425" shape-rendering="crispEdges">
<rect x="1300" y="106" width="1" height="425" fill="#267326"/>
<rect x="1381" y="106" width="1" height="425" fill="#267326"/>
<rect x="1461" y="106" width="1" height="425" fill="#267326"/>
<rect x="1542" y="106" width="1" height="425" fill="#267326"/>
<rect x="1622" y="106" width="1" height="425" fill="#267326"/>
<rect x="1703" y="106" width="1" height="425" fill="#267326"/>
<rect x="1783" y="106" width="1" height="425" fill="#267326"/>
<rect x="1864" y="106" width="1" height="425" fill="#267326"/>
<rect x="1269" y="157" width="651" height="1" fill="#267326"/>
<rect x="1269" y="237" width="651" height="1" fill="#267326"/>
<rect x="1269" y="318" width="651" height="1" fill="#267326"/>
<rect x="1269" y="399" width="651" height="1" fill="#267326"/>
<rect x="1269" y="479" width="651" height="1" fill="#267326"/>
<text x="1303" y="123" fill="#267326" font-family="Liberation Sans" font-size="12.5" >-15</text>
<text x="1384" y="123" fill="#267326" font-family="Liberation Sans" font-size="12.5" >-10</text>
<text x="1464" y="123" fill="#267326" font-family="Liberation Sans" font-size="12.5" >-5</text>
<text x="1545" y="123" fill="#267326" font-family="Liberation Sans" font-size="12.5" >0</text>
<text x="1625" y="123" fill="#267326" font-family="Liberation Sans" font-size="12.5" >5</text>
<text x="1706" y="123" fill="#267326" font-family="Liberation Sans" font-size="12.5" >10</text>
<text x="1786" y="123" fill="#267326" font-family="Liberation Sans" font-size="12.5" >15</text>
<text x="1867" y="123" fill="#267326" font-family="Liberation Sans" font-size="12.5" >20</text>
<text x="1272" y="152" fill="#267326" font-family="Liberation Sans" font-size="12.5" >10</text>
<text x="1272" y="232" fill="#267326" font-family="Liberation Sans" font-size="12.5" >5</text>
<text x="1272" y="313" fill="#267326" font-family="Liberation Sans" font-size="12.5" >0</text>
<text x="1272" y="394" fill="#267326" font-family="Liberation Sans" font-size="12.5" >-5</text>
<text x="1272" y="474" fill="#267326" font-family="Liberation Sans" font-size="12.5" >-10</text>
<text x="1274" y="122" fill="#8080ff" font-family="Liberation Sans" font-size="12.5" font-size="13.5" letter-spacing="0.5">front</text>
<text x="1303" y="123" fill="#267326" font-family="Liberation Sans" font-size="12.5" >-15</text>
<text x="1591" y="122" fill="#00ff00" font-family="Liberation Sans" font-size="12.5" >y</text>
<text x="1907" y="318" fill="#ff0000" font-family="Liberation Sans" font-size="12.5" >x</text>
<rect x="1540.5" y="226.5" width="3" height="53" fill="none" stroke="#a0a0a0"/>
<rect x="1541" y="265" width="3" height="15" fill="#000"/>
<rect x="1542" y="260" width="2" height="58" fill="#a0a0a0"/>
<rect x="1538" y="253" width="6" height="12" fill="#ffff99"/>
<rect x="1544" y="258" width="3" height="7" fill="#ffff99"/>
<line x1="1546" y1="264" x2="1563" y2="257.5" stroke="#a0a0a0" stroke-width="1"/>
<polygon points="1563.5,252.5 1567,261.5 1574.5,254.5" fill="none" stroke="#a0a0a0" stroke-width="1"/>
<line x1="1571" y1="250" x2="1578" y2="258" stroke="#a0a0a0" stroke-width="1"/>
<line x1="1578" y1="250" x2="1571" y2="258" stroke="#a0a0a0" stroke-width="1"/>
<line x1="1570" y1="254.5" x2="1580" y2="254.5" stroke="#a0a0a0" stroke-width="1"/>
<line x1="1574.5" y1="249" x2="1574.5" y2="260" stroke="#a0a0a0" stroke-width="1"/>
<rect x="1542" y="307" width="2" height="11" fill="#00ff00"/>
<polygon points="1539.5,307.5 1542.5,302.5 1545.5,307.5" fill="none" stroke="#00ff00" stroke-width="1"/>
<rect x="1545" y="318" width="14" height="1" fill="#ff0000"/>
<polygon points="1553.5,315.5 1558.5,318.5 1553.5,321.5" fill="none" stroke="#ff0000" stroke-width="1"/>
<rect x="1539.5" y="315.5" width="5" height="5" fill="none" stroke="#0000ff"/>
</svg></div>
<div class="vp" style="left:637px;top:544px;width:628px;height:421px"><svg width="628" height="421" viewBox="637 544 628 421" shape-rendering="crispEdges">
<rect x="670" y="544" width="1" height="421" fill="#267326"/>
<rect x="739" y="544" width="1" height="421" fill="#267326"/>
<rect x="808" y="544" width="1" height="421" fill="#267326"/>
<rect x="877" y="544" width="1" height="421" fill="#267326"/>
<rect x="946" y="544" width="1" height="421" fill="#267326"/>
<rect x="1015" y="544" width="1" height="421" fill="#267326"/>
<rect x="1084" y="544" width="1" height="421" fill="#267326"/>
<rect x="1153" y="544" width="1" height="421" fill="#267326"/>
<rect x="1222" y="544" width="1" height="421" fill="#267326"/>
<rect x="637" y="564" width="628" height="1" fill="#267326"/>
<rect x="637" y="633" width="628" height="1" fill="#267326"/>
<rect x="637" y="702" width="628" height="1" fill="#267326"/>
<rect x="637" y="771" width="628" height="1" fill="#267326"/>
<rect x="637" y="840" width="628" height="1" fill="#267326"/>
<rect x="637" y="909" width="628" height="1" fill="#267326"/>
<text x="673" y="561" fill="#267326" font-family="Liberation Sans" font-size="12.5" >-3</text>
<text x="742" y="561" fill="#267326" font-family="Liberation Sans" font-size="12.5" >-2</text>
<text x="811" y="561" fill="#267326" font-family="Liberation Sans" font-size="12.5" >-1</text>
<text x="880" y="561" fill="#267326" font-family="Liberation Sans" font-size="12.5" >0</text>
<text x="949" y="561" fill="#267326" font-family="Liberation Sans" font-size="12.5" >1</text>
<text x="1018" y="561" fill="#267326" font-family="Liberation Sans" font-size="12.5" >2</text>
<text x="1087" y="561" fill="#267326" font-family="Liberation Sans" font-size="12.5" >3</text>
<text x="1156" y="561" fill="#267326" font-family="Liberation Sans" font-size="12.5" >4</text>
<text x="1225" y="561" fill="#267326" font-family="Liberation Sans" font-size="12.5" >5</text>
<text x="640" y="628" fill="#267326" font-family="Liberation Sans" font-size="12.5" >3</text>
<text x="640" y="697" fill="#267326" font-family="Liberation Sans" font-size="12.5" >2</text>
<text x="640" y="766" fill="#267326" font-family="Liberation Sans" font-size="12.5" >1</text>
<text x="640" y="835" fill="#267326" font-family="Liberation Sans" font-size="12.5" >0</text>
<text x="640" y="904" fill="#267326" font-family="Liberation Sans" font-size="12.5" >-1</text>
<text x="642" y="561" fill="#8080ff" font-family="Liberation Sans" font-size="12.5" font-size="13.5" letter-spacing="0.6">top</text>
<text x="950" y="561" fill="#0000ff" font-family="Liberation Sans" font-size="12.5" >z</text>
<text x="1254" y="754" fill="#ff0000" font-family="Liberation Sans" font-size="12.5" >x</text>
<rect x="877" y="630" width="8" height="20" fill="#a0a0a0"/>
<rect x="879" y="638" width="5" height="1" fill="#000"/>
<rect x="879" y="642" width="5" height="1" fill="#000"/>
<rect x="876" y="650" width="10" height="36" fill="#a0a0a0"/>
<rect x="878" y="656" width="6" height="1" fill="#000"/>
<rect x="878" y="658" width="6" height="1" fill="#000"/>
<rect x="878" y="660" width="6" height="1" fill="#000"/>
<rect x="878" y="662" width="6" height="1" fill="#000"/>
<rect x="878" y="664" width="6" height="1" fill="#000"/>
<rect x="878" y="666" width="6" height="1" fill="#000"/>
<rect x="878" y="668" width="6" height="1" fill="#000"/>
<rect x="878" y="670" width="6" height="1" fill="#000"/>
<rect x="878" y="672" width="6" height="1" fill="#000"/>
<rect x="878" y="674" width="6" height="1" fill="#000"/>
<rect x="878" y="676" width="6" height="1" fill="#000"/>
<rect x="878" y="678" width="6" height="1" fill="#000"/>
<rect x="878" y="680" width="6" height="1" fill="#000"/>
<rect x="876" y="686" width="1" height="59" fill="#a0a0a0"/>
<rect x="885" y="686" width="1" height="59" fill="#a0a0a0"/>
<rect x="877" y="744" width="9" height="11" fill="#a0a0a0"/>
<rect x="879" y="746" width="5" height="1" fill="#000"/>
<rect x="879" y="748" width="5" height="1" fill="#000"/>
<rect x="879" y="750" width="5" height="1" fill="#000"/>
<rect x="879" y="752" width="5" height="1" fill="#000"/>
<rect x="879" y="754" width="5" height="1" fill="#000"/>
<rect x="876" y="754" width="10" height="45" fill="#ffff80"/>
<rect x="873" y="772" width="16" height="7" fill="#ffff80"/>
<rect x="873" y="793" width="8" height="7" fill="#ffff80"/>
<rect x="879" y="757" width="5" height="1" fill="#000"/>
<rect x="879" y="759" width="5" height="1" fill="#000"/>
<rect x="879" y="761" width="5" height="1" fill="#000"/>
<rect x="879" y="763" width="5" height="1" fill="#000"/>
<rect x="879" y="765" width="5" height="1" fill="#000"/>
<rect x="879" y="767" width="5" height="1" fill="#000"/>
<rect x="879" y="781" width="5" height="1" fill="#000"/>
<rect x="879" y="783" width="5" height="1" fill="#000"/>
<rect x="879" y="785" width="5" height="1" fill="#000"/>
<rect x="879" y="787" width="5" height="1" fill="#000"/>
<rect x="879" y="789" width="5" height="1" fill="#000"/>
<polyline points="867.5,788.5 873,779 876,788.5" fill="none" stroke="#0000ff" stroke-width="1"/>
<rect x="867" y="788" width="9" height="1" fill="#0000ff"/>
<rect x="886" y="788" width="2" height="1" fill="#0000ff"/>
<rect x="877" y="799" width="1" height="69" fill="#a0a0a0"/>
<rect x="884" y="799" width="1" height="69" fill="#a0a0a0"/>
<rect x="877" y="827" width="8" height="1" fill="#a0a0a0"/>
<rect x="877" y="867" width="8" height="1" fill="#a0a0a0"/>
<rect x="870.5" y="840.5" width="15" height="35" rx="1" fill="none" stroke="#a0a0a0"/>
<rect x="867.5" y="830.5" width="20" height="21" fill="none" stroke="#00ff00"/>
<line x1="867.5" y1="830.5" x2="887.5" y2="851.5" stroke="#00ff00" stroke-width="1"/>
<line x1="887.5" y1="830.5" x2="867.5" y2="851.5" stroke="#00ff00" stroke-width="1"/>
<rect x="888" y="840" width="41" height="1" fill="#ff0000"/>
<polygon points="929.5,830.5 929.5,851.5 946.5,840.5" fill="none" stroke="#ff0000" stroke-width="1"/>
<line x1="885.5" y1="726.5" x2="1015.5" y2="737.5" stroke="#a0a0a0" stroke-width="1"/>
<polygon points="975.8,699.7 989,700.2 982.4,769 969.7,768" fill="none" stroke="#a0a0a0" stroke-width="1"/>
<line x1="1015.3" y1="737.1" x2="975.8" y2="699.7" stroke="#a0a0a0" stroke-width="1"/>
<line x1="1015.3" y1="737.1" x2="989" y2="700.2" stroke="#a0a0a0" stroke-width="1"/>
<line x1="1015.3" y1="737.1" x2="982.4" y2="769" stroke="#a0a0a0" stroke-width="1"/>
<line x1="1015.3" y1="737.1" x2="969.7" y2="768" stroke="#a0a0a0" stroke-width="1"/>
<line x1="1015.3" y1="719" x2="1015.3" y2="754" stroke="#a0a0a0" stroke-width="1"/>
<line x1="998" y1="737.1" x2="1033" y2="737.1" stroke="#a0a0a0" stroke-width="1"/>
<line x1="1005" y1="727" x2="1025" y2="747" stroke="#a0a0a0" stroke-width="1"/>
<line x1="1025" y1="727" x2="1005" y2="747" stroke="#a0a0a0" stroke-width="1"/>
</svg></div>
<div class="vp" style="left:1269px;top:544px;width:651px;height:421px"><svg width="651" height="421" viewBox="1269 544 651 421" shape-rendering="crispEdges">
<rect x="1269" y="572" width="650" height="1" fill="#6a6aff"/>
<rect x="1269" y="938" width="650" height="1" fill="#6a6aff"/>
<rect x="1917" y="572" width="1" height="367" fill="#6a6aff"/>
<text x="1275" y="560" fill="#8080ff" font-family="Liberation Sans" font-size="12.5" font-size="13" letter-spacing="0.4">camera: (unnamed)</text>
<polyline points="1272.8,544 1330.7,767.9" fill="none" stroke="#a0a0a0" stroke-width="1"/>
<polyline points="1269,591 1319,774.8" fill="none" stroke="#a0a0a0" stroke-width="1"/>
<polyline points="1269,638.7 1292.4,720.1" fill="none" stroke="#a0a0a0" stroke-width="1"/>
<polyline points="1269,693.3 1292.4,720.1 1269,720.1" fill="none" stroke="#a0a0a0" stroke-width="1"/>
<polyline points="1292.4,720.1 1269,728.4" fill="none" stroke="#a0a0a0" stroke-width="1"/>
<polyline points="1284.6,723.4 1326.9,803.4" fill="none" stroke="#a0a0a0" stroke-width="1"/>
<polyline points="1269,723 1316.3,812.3" fill="none" stroke="#a0a0a0" stroke-width="1"/>
<polyline points="1269,744.6 1337.7,964.6" fill="none" stroke="#a0a0a0" stroke-width="1"/>
<polyline points="1269,693 1350.5,964.6" fill="none" stroke="#a0a0a0" stroke-width="1"/>
<polyline points="1322,544 1398,720" fill="none" stroke="#a0a0a0" stroke-width="1"/>
<polyline points="1334,544 1415.6,744.6" fill="none" stroke="#a0a0a0" stroke-width="1"/>
<polyline points="1398.2,726.7 1426,771.1" fill="none" stroke="#a0a0a0" stroke-width="1"/>
<polyline points="1402.6,734.5 1417.1,772.2" fill="none" stroke="#a0a0a0" stroke-width="1"/>
<polyline points="1388.7,726.2 1395.4,722.3 1461.3,719.6 1457.1,725 1388.7,726.2 1398.2,772.4" fill="none" stroke="#a0a0a0" stroke-width="1"/>
<polyline points="1395.4,722.3 1405.4,764" fill="none" stroke="#a0a0a0" stroke-width="1"/>
<polyline points="1457.1,725 1462.4,763.8" fill="none" stroke="#a0a0a0" stroke-width="1"/>
<polyline points="1461.3,719.6 1467.7,762.7" fill="none" stroke="#a0a0a0" stroke-width="1"/>
<polyline points="1292.3,769 1405.4,765.7 1594,760.6 1771.5,754.2" fill="none" stroke="#a0a0a0" stroke-width="1"/>
<polyline points="1279,776 1319.1,775 1439,771.1 1594,766.3 1783.2,761.6" fill="none" stroke="#a0a0a0" stroke-width="1"/>
<polyline points="1279,776 1291.3,770" fill="none" stroke="#a0a0a0" stroke-width="1"/>
<polyline points="1319.1,775 1330.8,768" fill="none" stroke="#a0a0a0" stroke-width="1"/>
<polyline points="1771.5,754.2 1783.2,761.6 1776.8,801.6 1767.2,793.5 1771.5,754.2" fill="none" stroke="#a0a0a0" stroke-width="1"/>
<polyline points="1517.9,800.8 1767.2,793.5" fill="none" stroke="#a0a0a0" stroke-width="1"/>
<polyline points="1530.4,809.9 1776.8,801.6" fill="none" stroke="#a0a0a0" stroke-width="1"/>
<polyline points="1326.9,803.4 1429.4,781.1 1423.8,788.4 1316.3,812.3 1326.9,803.4" fill="none" stroke="#a0a0a0" stroke-width="1"/>
<polyline points="1429.4,781.1 1426,771.1" fill="none" stroke="#a0a0a0" stroke-width="1"/>
<polyline points="1423.8,788.4 1417.1,772.2" fill="none" stroke="#a0a0a0" stroke-width="1"/>
<polyline points="1732.2,755.7 1716.2,872.6 1723.7,881.7 1740.7,762.7 1732.2,755.7" fill="none" stroke="#a0a0a0" stroke-width="1"/>
<polyline points="1735.3,802 1725.8,880.7" fill="none" stroke="#a0a0a0" stroke-width="1"/>
<polyline points="1330.2,894.3 1594,880.2 1715.9,873.7 1773.4,870.3" fill="none" stroke="#a0a0a0" stroke-width="1"/>
<polyline points="1320,906.1 1594,891.3 1749.7,882.9" fill="none" stroke="#a0a0a0" stroke-width="1"/>
<polyline points="1336,913.6 1594,898.7 1749.7,889.7" fill="none" stroke="#a0a0a0" stroke-width="1"/>
<polyline points="1326.4,926 1594,909.4 1749.7,899.7" fill="none" stroke="#a0a0a0" stroke-width="1"/>
<polyline points="1330.2,894.3 1320,906.1" fill="none" stroke="#a0a0a0" stroke-width="1"/>
<polyline points="1336,913.6 1326.4,926" fill="none" stroke="#a0a0a0" stroke-width="1"/>
<polyline points="1787,914.3 1773.4,965" fill="none" stroke="#a0a0a0" stroke-width="1"/>
<polyline points="1795.4,897.4 1783.6,965" fill="none" stroke="#a0a0a0" stroke-width="1"/>
<polyline points="1496.6,811.5 1503.9,895.5" fill="none" stroke="#a0a0a0" stroke-width="1"/>
<polyline points="1500.2,802 1508.1,894.5" fill="none" stroke="#a0a0a0" stroke-width="1"/>
<ellipse cx="1500.4" cy="849" rx="52" ry="47.3" fill="none" stroke="#a0a0a0" stroke-width="1" shape-rendering="auto"/><ellipse cx="1502.6" cy="847.7" rx="47.6" ry="36" fill="none" stroke="#a0a0a0" stroke-width="1" shape-rendering="auto"/><line x1="1552.4" y1="849.0" x2="1550.2" y2="847.7" stroke="#a0a0a0" stroke-width="1" shape-rendering="auto"/><line x1="1551.9" y1="855.7" x2="1549.7" y2="852.8" stroke="#a0a0a0" stroke-width="1" shape-rendering="auto"/><line x1="1550.3" y1="862.3" x2="1548.3" y2="857.8" stroke="#a0a0a0" stroke-width="1" shape-rendering="auto"/><line x1="1547.7" y1="868.6" x2="1545.9" y2="862.7" stroke="#a0a0a0" stroke-width="1" shape-rendering="auto"/><line x1="1544.1" y1="874.6" x2="1542.6" y2="867.2" stroke="#a0a0a0" stroke-width="1" shape-rendering="auto"/><line x1="1539.7" y1="880.0" x2="1538.6" y2="871.3" stroke="#a0a0a0" stroke-width="1" shape-rendering="auto"/><line x1="1534.5" y1="884.7" x2="1533.8" y2="874.9" stroke="#a0a0a0" stroke-width="1" shape-rendering="auto"/><line x1="1528.5" y1="888.8" x2="1528.3" y2="878.0" stroke="#a0a0a0" stroke-width="1" shape-rendering="auto"/><line x1="1522.0" y1="892.0" x2="1522.4" y2="880.4" stroke="#a0a0a0" stroke-width="1" shape-rendering="auto"/><line x1="1515.1" y1="894.4" x2="1516.0" y2="882.2" stroke="#a0a0a0" stroke-width="1" shape-rendering="auto"/><line x1="1507.8" y1="895.8" x2="1509.4" y2="883.3" stroke="#a0a0a0" stroke-width="1" shape-rendering="auto"/><line x1="1500.4" y1="896.3" x2="1502.6" y2="883.7" stroke="#a0a0a0" stroke-width="1" shape-rendering="auto"/><line x1="1493.0" y1="895.8" x2="1495.8" y2="883.3" stroke="#a0a0a0" stroke-width="1" shape-rendering="auto"/><line x1="1485.7" y1="894.4" x2="1489.2" y2="882.2" stroke="#a0a0a0" stroke-width="1" shape-rendering="auto"/><line x1="1478.8" y1="892.0" x2="1482.8" y2="880.4" stroke="#a0a0a0" stroke-width="1" shape-rendering="auto"/><line x1="1472.3" y1="888.8" x2="1476.9" y2="878.0" stroke="#a0a0a0" stroke-width="1" shape-rendering="auto"/><line x1="1466.3" y1="884.7" x2="1471.4" y2="874.9" stroke="#a0a0a0" stroke-width="1" shape-rendering="auto"/><line x1="1461.1" y1="880.0" x2="1466.6" y2="871.3" stroke="#a0a0a0" stroke-width="1" shape-rendering="auto"/><line x1="1456.7" y1="874.6" x2="1462.6" y2="867.2" stroke="#a0a0a0" stroke-width="1" shape-rendering="auto"/><line x1="1453.1" y1="868.6" x2="1459.3" y2="862.7" stroke="#a0a0a0" stroke-width="1" shape-rendering="auto"/><line x1="1450.5" y1="862.3" x2="1456.9" y2="857.8" stroke="#a0a0a0" stroke-width="1" shape-rendering="auto"/><line x1="1448.9" y1="855.7" x2="1455.5" y2="852.8" stroke="#a0a0a0" stroke-width="1" shape-rendering="auto"/><line x1="1448.4" y1="849.0" x2="1455.0" y2="847.7" stroke="#a0a0a0" stroke-width="1" shape-rendering="auto"/><line x1="1448.9" y1="842.3" x2="1455.5" y2="842.6" stroke="#a0a0a0" stroke-width="1" shape-rendering="auto"/><line x1="1450.5" y1="835.7" x2="1456.9" y2="837.6" stroke="#a0a0a0" stroke-width="1" shape-rendering="auto"/><line x1="1453.1" y1="829.4" x2="1459.3" y2="832.7" stroke="#a0a0a0" stroke-width="1" shape-rendering="auto"/><line x1="1456.7" y1="823.4" x2="1462.6" y2="828.2" stroke="#a0a0a0" stroke-width="1" shape-rendering="auto"/><line x1="1461.1" y1="818.0" x2="1466.6" y2="824.1" stroke="#a0a0a0" stroke-width="1" shape-rendering="auto"/><line x1="1466.3" y1="813.3" x2="1471.4" y2="820.5" stroke="#a0a0a0" stroke-width="1" shape-rendering="auto"/><line x1="1472.3" y1="809.2" x2="1476.9" y2="817.4" stroke="#a0a0a0" stroke-width="1" shape-rendering="auto"/><line x1="1478.8" y1="806.0" x2="1482.8" y2="815.0" stroke="#a0a0a0" stroke-width="1" shape-rendering="auto"/><line x1="1485.7" y1="803.6" x2="1489.2" y2="813.2" stroke="#a0a0a0" stroke-width="1" shape-rendering="auto"/><line x1="1493.0" y1="802.2" x2="1495.8" y2="812.1" stroke="#a0a0a0" stroke-width="1" shape-rendering="auto"/><line x1="1500.4" y1="801.7" x2="1502.6" y2="811.7" stroke="#a0a0a0" stroke-width="1" shape-rendering="auto"/><line x1="1507.8" y1="802.2" x2="1509.4" y2="812.1" stroke="#a0a0a0" stroke-width="1" shape-rendering="auto"/><line x1="1515.1" y1="803.6" x2="1516.0" y2="813.2" stroke="#a0a0a0" stroke-width="1" shape-rendering="auto"/><line x1="1522.0" y1="806.0" x2="1522.4" y2="815.0" stroke="#a0a0a0" stroke-width="1" shape-rendering="auto"/><line x1="1528.5" y1="809.2" x2="1528.3" y2="817.4" stroke="#a0a0a0" stroke-width="1" shape-rendering="auto"/><line x1="1534.5" y1="813.3" x2="1533.8" y2="820.5" stroke="#a0a0a0" stroke-width="1" shape-rendering="auto"/><line x1="1539.7" y1="818.0" x2="1538.6" y2="824.1" stroke="#a0a0a0" stroke-width="1" shape-rendering="auto"/><line x1="1544.1" y1="823.4" x2="1542.6" y2="828.2" stroke="#a0a0a0" stroke-width="1" shape-rendering="auto"/><line x1="1547.7" y1="829.4" x2="1545.9" y2="832.7" stroke="#a0a0a0" stroke-width="1" shape-rendering="auto"/><line x1="1550.3" y1="835.7" x2="1548.3" y2="837.6" stroke="#a0a0a0" stroke-width="1" shape-rendering="auto"/><line x1="1551.9" y1="842.3" x2="1549.7" y2="842.6" stroke="#a0a0a0" stroke-width="1" shape-rendering="auto"/>
<ellipse cx="1736.4" cy="757.3" rx="45.7" ry="42.5" fill="none" stroke="#a0a0a0" stroke-width="1" shape-rendering="auto"/><ellipse cx="1735.3" cy="757.4" rx="37.5" ry="37.5" fill="none" stroke="#a0a0a0" stroke-width="1" shape-rendering="auto"/><line x1="1782.1" y1="757.3" x2="1772.8" y2="757.4" stroke="#a0a0a0" stroke-width="1" shape-rendering="auto"/><line x1="1781.5" y1="763.9" x2="1772.3" y2="763.3" stroke="#a0a0a0" stroke-width="1" shape-rendering="auto"/><line x1="1779.9" y1="770.4" x2="1771.0" y2="769.0" stroke="#a0a0a0" stroke-width="1" shape-rendering="auto"/><line x1="1777.1" y1="776.6" x2="1768.7" y2="774.4" stroke="#a0a0a0" stroke-width="1" shape-rendering="auto"/><line x1="1773.4" y1="782.3" x2="1765.6" y2="779.4" stroke="#a0a0a0" stroke-width="1" shape-rendering="auto"/><line x1="1768.7" y1="787.4" x2="1761.8" y2="783.9" stroke="#a0a0a0" stroke-width="1" shape-rendering="auto"/><line x1="1763.3" y1="791.7" x2="1757.3" y2="787.7" stroke="#a0a0a0" stroke-width="1" shape-rendering="auto"/><line x1="1757.1" y1="795.2" x2="1752.3" y2="790.8" stroke="#a0a0a0" stroke-width="1" shape-rendering="auto"/><line x1="1750.5" y1="797.7" x2="1746.9" y2="793.1" stroke="#a0a0a0" stroke-width="1" shape-rendering="auto"/><line x1="1743.5" y1="799.3" x2="1741.2" y2="794.4" stroke="#a0a0a0" stroke-width="1" shape-rendering="auto"/><line x1="1736.4" y1="799.8" x2="1735.3" y2="794.9" stroke="#a0a0a0" stroke-width="1" shape-rendering="auto"/><line x1="1729.3" y1="799.3" x2="1729.4" y2="794.4" stroke="#a0a0a0" stroke-width="1" shape-rendering="auto"/><line x1="1722.3" y1="797.7" x2="1723.7" y2="793.1" stroke="#a0a0a0" stroke-width="1" shape-rendering="auto"/><line x1="1715.7" y1="795.2" x2="1718.3" y2="790.8" stroke="#a0a0a0" stroke-width="1" shape-rendering="auto"/><line x1="1709.5" y1="791.7" x2="1713.3" y2="787.7" stroke="#a0a0a0" stroke-width="1" shape-rendering="auto"/><line x1="1704.1" y1="787.4" x2="1708.8" y2="783.9" stroke="#a0a0a0" stroke-width="1" shape-rendering="auto"/><line x1="1699.4" y1="782.3" x2="1705.0" y2="779.4" stroke="#a0a0a0" stroke-width="1" shape-rendering="auto"/><line x1="1695.7" y1="776.6" x2="1701.9" y2="774.4" stroke="#a0a0a0" stroke-width="1" shape-rendering="auto"/><line x1="1692.9" y1="770.4" x2="1699.6" y2="769.0" stroke="#a0a0a0" stroke-width="1" shape-rendering="auto"/><line x1="1691.3" y1="763.9" x2="1698.3" y2="763.3" stroke="#a0a0a0" stroke-width="1" shape-rendering="auto"/><line x1="1690.7" y1="757.3" x2="1697.8" y2="757.4" stroke="#a0a0a0" stroke-width="1" shape-rendering="auto"/><line x1="1691.3" y1="750.7" x2="1698.3" y2="751.5" stroke="#a0a0a0" stroke-width="1" shape-rendering="auto"/><line x1="1692.9" y1="744.2" x2="1699.6" y2="745.8" stroke="#a0a0a0" stroke-width="1" shape-rendering="auto"/><line x1="1695.7" y1="738.0" x2="1701.9" y2="740.4" stroke="#a0a0a0" stroke-width="1" shape-rendering="auto"/><line x1="1699.4" y1="732.3" x2="1705.0" y2="735.4" stroke="#a0a0a0" stroke-width="1" shape-rendering="auto"/><line x1="1704.1" y1="727.2" x2="1708.8" y2="730.9" stroke="#a0a0a0" stroke-width="1" shape-rendering="auto"/><line x1="1709.5" y1="722.9" x2="1713.3" y2="727.1" stroke="#a0a0a0" stroke-width="1" shape-rendering="auto"/><line x1="1715.7" y1="719.4" x2="1718.3" y2="724.0" stroke="#a0a0a0" stroke-width="1" shape-rendering="auto"/><line x1="1722.3" y1="716.9" x2="1723.7" y2="721.7" stroke="#a0a0a0" stroke-width="1" shape-rendering="auto"/><line x1="1729.3" y1="715.3" x2="1729.4" y2="720.4" stroke="#a0a0a0" stroke-width="1" shape-rendering="auto"/><line x1="1736.4" y1="714.8" x2="1735.3" y2="719.9" stroke="#a0a0a0" stroke-width="1" shape-rendering="auto"/><line x1="1743.5" y1="715.3" x2="1741.2" y2="720.4" stroke="#a0a0a0" stroke-width="1" shape-rendering="auto"/><line x1="1750.5" y1="716.9" x2="1746.9" y2="721.7" stroke="#a0a0a0" stroke-width="1" shape-rendering="auto"/><line x1="1757.1" y1="719.4" x2="1752.3" y2="724.0" stroke="#a0a0a0" stroke-width="1" shape-rendering="auto"/><line x1="1763.3" y1="722.9" x2="1757.3" y2="727.1" stroke="#a0a0a0" stroke-width="1" shape-rendering="auto"/><line x1="1768.7" y1="727.2" x2="1761.8" y2="730.9" stroke="#a0a0a0" stroke-width="1" shape-rendering="auto"/><line x1="1773.4" y1="732.3" x2="1765.6" y2="735.4" stroke="#a0a0a0" stroke-width="1" shape-rendering="auto"/><line x1="1777.1" y1="738.0" x2="1768.7" y2="740.4" stroke="#a0a0a0" stroke-width="1" shape-rendering="auto"/><line x1="1779.9" y1="744.2" x2="1771.0" y2="745.8" stroke="#a0a0a0" stroke-width="1" shape-rendering="auto"/><line x1="1781.5" y1="750.7" x2="1772.3" y2="751.5" stroke="#a0a0a0" stroke-width="1" shape-rendering="auto"/>
<ellipse cx="1773.4" cy="893.3" rx="25.4" ry="23.7" fill="none" stroke="#a0a0a0" stroke-width="1" shape-rendering="auto"/><ellipse cx="1775.5" cy="888.5" rx="16" ry="11" fill="none" stroke="#a0a0a0" stroke-width="1" shape-rendering="auto"/><line x1="1798.8" y1="893.3" x2="1791.4" y2="889.8" stroke="#a0a0a0" stroke-width="1" shape-rendering="auto"/><line x1="1798.6" y1="896.6" x2="1791.0" y2="891.3" stroke="#a0a0a0" stroke-width="1" shape-rendering="auto"/><line x1="1797.8" y1="899.8" x2="1790.2" y2="892.8" stroke="#a0a0a0" stroke-width="1" shape-rendering="auto"/><line x1="1796.6" y1="902.9" x2="1789.2" y2="894.1" stroke="#a0a0a0" stroke-width="1" shape-rendering="auto"/><line x1="1794.9" y1="905.9" x2="1788.0" y2="895.4" stroke="#a0a0a0" stroke-width="1" shape-rendering="auto"/><line x1="1792.9" y1="908.5" x2="1786.4" y2="896.5" stroke="#a0a0a0" stroke-width="1" shape-rendering="auto"/><line x1="1790.4" y1="910.9" x2="1784.7" y2="897.5" stroke="#a0a0a0" stroke-width="1" shape-rendering="auto"/><line x1="1787.6" y1="912.9" x2="1782.8" y2="898.3" stroke="#a0a0a0" stroke-width="1" shape-rendering="auto"/><line x1="1784.5" y1="914.6" x2="1780.7" y2="898.9" stroke="#a0a0a0" stroke-width="1" shape-rendering="auto"/><line x1="1781.2" y1="915.8" x2="1778.6" y2="899.3" stroke="#a0a0a0" stroke-width="1" shape-rendering="auto"/><line x1="1777.8" y1="916.6" x2="1776.4" y2="899.5" stroke="#a0a0a0" stroke-width="1" shape-rendering="auto"/><line x1="1774.3" y1="917.0" x2="1774.1" y2="899.5" stroke="#a0a0a0" stroke-width="1" shape-rendering="auto"/><line x1="1770.7" y1="916.9" x2="1771.9" y2="899.2" stroke="#a0a0a0" stroke-width="1" shape-rendering="auto"/><line x1="1767.3" y1="916.3" x2="1769.8" y2="898.8" stroke="#a0a0a0" stroke-width="1" shape-rendering="auto"/><line x1="1763.9" y1="915.3" x2="1767.8" y2="898.1" stroke="#a0a0a0" stroke-width="1" shape-rendering="auto"/><line x1="1760.7" y1="913.8" x2="1765.9" y2="897.3" stroke="#a0a0a0" stroke-width="1" shape-rendering="auto"/><line x1="1757.8" y1="912.0" x2="1764.2" y2="896.3" stroke="#a0a0a0" stroke-width="1" shape-rendering="auto"/><line x1="1755.1" y1="909.8" x2="1762.7" y2="895.1" stroke="#a0a0a0" stroke-width="1" shape-rendering="auto"/><line x1="1752.9" y1="907.2" x2="1761.5" y2="893.9" stroke="#a0a0a0" stroke-width="1" shape-rendering="auto"/><line x1="1751.0" y1="904.4" x2="1760.6" y2="892.5" stroke="#a0a0a0" stroke-width="1" shape-rendering="auto"/><line x1="1749.5" y1="901.4" x2="1759.9" y2="891.0" stroke="#a0a0a0" stroke-width="1" shape-rendering="auto"/><line x1="1748.6" y1="898.2" x2="1759.6" y2="889.5" stroke="#a0a0a0" stroke-width="1" shape-rendering="auto"/><line x1="1748.1" y1="895.0" x2="1759.5" y2="887.9" stroke="#a0a0a0" stroke-width="1" shape-rendering="auto"/><line x1="1748.1" y1="891.6" x2="1759.8" y2="886.4" stroke="#a0a0a0" stroke-width="1" shape-rendering="auto"/><line x1="1748.6" y1="888.4" x2="1760.4" y2="884.9" stroke="#a0a0a0" stroke-width="1" shape-rendering="auto"/><line x1="1749.5" y1="885.2" x2="1761.2" y2="883.5" stroke="#a0a0a0" stroke-width="1" shape-rendering="auto"/><line x1="1751.0" y1="882.2" x2="1762.4" y2="882.2" stroke="#a0a0a0" stroke-width="1" shape-rendering="auto"/><line x1="1752.9" y1="879.4" x2="1763.8" y2="881.0" stroke="#a0a0a0" stroke-width="1" shape-rendering="auto"/><line x1="1755.1" y1="876.8" x2="1765.4" y2="880.0" stroke="#a0a0a0" stroke-width="1" shape-rendering="auto"/><line x1="1757.8" y1="874.6" x2="1767.2" y2="879.1" stroke="#a0a0a0" stroke-width="1" shape-rendering="auto"/><line x1="1760.7" y1="872.8" x2="1769.2" y2="878.4" stroke="#a0a0a0" stroke-width="1" shape-rendering="auto"/><line x1="1763.9" y1="871.3" x2="1771.3" y2="877.9" stroke="#a0a0a0" stroke-width="1" shape-rendering="auto"/><line x1="1767.3" y1="870.3" x2="1773.5" y2="877.6" stroke="#a0a0a0" stroke-width="1" shape-rendering="auto"/><line x1="1770.7" y1="869.7" x2="1775.7" y2="877.5" stroke="#a0a0a0" stroke-width="1" shape-rendering="auto"/><line x1="1774.3" y1="869.6" x2="1778.0" y2="877.6" stroke="#a0a0a0" stroke-width="1" shape-rendering="auto"/><line x1="1777.8" y1="870.0" x2="1780.1" y2="878.0" stroke="#a0a0a0" stroke-width="1" shape-rendering="auto"/><line x1="1781.2" y1="870.8" x2="1782.2" y2="878.5" stroke="#a0a0a0" stroke-width="1" shape-rendering="auto"/><line x1="1784.5" y1="872.0" x2="1784.2" y2="879.3" stroke="#a0a0a0" stroke-width="1" shape-rendering="auto"/><line x1="1787.6" y1="873.7" x2="1786.0" y2="880.2" stroke="#a0a0a0" stroke-width="1" shape-rendering="auto"/><line x1="1790.4" y1="875.7" x2="1787.6" y2="881.3" stroke="#a0a0a0" stroke-width="1" shape-rendering="auto"/><line x1="1792.9" y1="878.1" x2="1788.9" y2="882.5" stroke="#a0a0a0" stroke-width="1" shape-rendering="auto"/><line x1="1794.9" y1="880.7" x2="1790.0" y2="883.8" stroke="#a0a0a0" stroke-width="1" shape-rendering="auto"/><line x1="1796.6" y1="883.7" x2="1790.8" y2="885.3" stroke="#a0a0a0" stroke-width="1" shape-rendering="auto"/><line x1="1797.8" y1="886.8" x2="1791.3" y2="886.8" stroke="#a0a0a0" stroke-width="1" shape-rendering="auto"/><line x1="1798.6" y1="890.0" x2="1791.5" y2="888.3" stroke="#a0a0a0" stroke-width="1" shape-rendering="auto"/>
<ellipse cx="1455.8" cy="713" rx="61.6" ry="58" fill="none" stroke="#ffff80" stroke-width="1" shape-rendering="auto"/><ellipse cx="1459.7" cy="710.5" rx="54.2" ry="52.7" fill="none" stroke="#ffff80" stroke-width="1" shape-rendering="auto"/><line x1="1517.4" y1="713.0" x2="1513.8" y2="706.8" stroke="#ffff80" stroke-width="1" shape-rendering="auto"/><line x1="1516.9" y1="720.6" x2="1513.8" y2="713.7" stroke="#ffff80" stroke-width="1" shape-rendering="auto"/><line x1="1515.3" y1="728.0" x2="1512.9" y2="720.5" stroke="#ffff80" stroke-width="1" shape-rendering="auto"/><line x1="1512.7" y1="735.2" x2="1511.1" y2="727.2" stroke="#ffff80" stroke-width="1" shape-rendering="auto"/><line x1="1509.1" y1="742.0" x2="1508.4" y2="733.6" stroke="#ffff80" stroke-width="1" shape-rendering="auto"/><line x1="1504.7" y1="748.3" x2="1504.9" y2="739.6" stroke="#ffff80" stroke-width="1" shape-rendering="auto"/><line x1="1499.4" y1="754.0" x2="1500.6" y2="745.1" stroke="#ffff80" stroke-width="1" shape-rendering="auto"/><line x1="1493.3" y1="759.0" x2="1495.6" y2="750.0" stroke="#ffff80" stroke-width="1" shape-rendering="auto"/><line x1="1486.6" y1="763.2" x2="1490.0" y2="754.2" stroke="#ffff80" stroke-width="1" shape-rendering="auto"/><line x1="1479.4" y1="766.6" x2="1483.9" y2="757.7" stroke="#ffff80" stroke-width="1" shape-rendering="auto"/><line x1="1471.7" y1="769.0" x2="1477.4" y2="760.3" stroke="#ffff80" stroke-width="1" shape-rendering="auto"/><line x1="1463.8" y1="770.5" x2="1470.5" y2="762.1" stroke="#ffff80" stroke-width="1" shape-rendering="auto"/><line x1="1455.8" y1="771.0" x2="1463.5" y2="763.1" stroke="#ffff80" stroke-width="1" shape-rendering="auto"/><line x1="1447.8" y1="770.5" x2="1456.4" y2="763.1" stroke="#ffff80" stroke-width="1" shape-rendering="auto"/><line x1="1439.9" y1="769.0" x2="1449.4" y2="762.2" stroke="#ffff80" stroke-width="1" shape-rendering="auto"/><line x1="1432.2" y1="766.6" x2="1442.5" y2="760.5" stroke="#ffff80" stroke-width="1" shape-rendering="auto"/><line x1="1425.0" y1="763.2" x2="1435.9" y2="757.9" stroke="#ffff80" stroke-width="1" shape-rendering="auto"/><line x1="1418.3" y1="759.0" x2="1429.8" y2="754.5" stroke="#ffff80" stroke-width="1" shape-rendering="auto"/><line x1="1412.2" y1="754.0" x2="1424.1" y2="750.3" stroke="#ffff80" stroke-width="1" shape-rendering="auto"/><line x1="1406.9" y1="748.3" x2="1419.1" y2="745.4" stroke="#ffff80" stroke-width="1" shape-rendering="auto"/><line x1="1402.5" y1="742.0" x2="1414.8" y2="740.0" stroke="#ffff80" stroke-width="1" shape-rendering="auto"/><line x1="1398.9" y1="735.2" x2="1411.2" y2="734.0" stroke="#ffff80" stroke-width="1" shape-rendering="auto"/><line x1="1396.3" y1="728.0" x2="1408.5" y2="727.7" stroke="#ffff80" stroke-width="1" shape-rendering="auto"/><line x1="1394.7" y1="720.6" x2="1406.6" y2="721.0" stroke="#ffff80" stroke-width="1" shape-rendering="auto"/><line x1="1394.2" y1="713.0" x2="1405.6" y2="714.2" stroke="#ffff80" stroke-width="1" shape-rendering="auto"/><line x1="1394.7" y1="705.4" x2="1405.6" y2="707.3" stroke="#ffff80" stroke-width="1" shape-rendering="auto"/><line x1="1396.3" y1="698.0" x2="1406.5" y2="700.5" stroke="#ffff80" stroke-width="1" shape-rendering="auto"/><line x1="1398.9" y1="690.8" x2="1408.3" y2="693.8" stroke="#ffff80" stroke-width="1" shape-rendering="auto"/><line x1="1402.5" y1="684.0" x2="1411.0" y2="687.4" stroke="#ffff80" stroke-width="1" shape-rendering="auto"/><line x1="1406.9" y1="677.7" x2="1414.5" y2="681.4" stroke="#ffff80" stroke-width="1" shape-rendering="auto"/><line x1="1412.2" y1="672.0" x2="1418.8" y2="675.9" stroke="#ffff80" stroke-width="1" shape-rendering="auto"/><line x1="1418.3" y1="667.0" x2="1423.8" y2="671.0" stroke="#ffff80" stroke-width="1" shape-rendering="auto"/><line x1="1425.0" y1="662.8" x2="1429.4" y2="666.8" stroke="#ffff80" stroke-width="1" shape-rendering="auto"/><line x1="1432.2" y1="659.4" x2="1435.5" y2="663.3" stroke="#ffff80" stroke-width="1" shape-rendering="auto"/><line x1="1439.9" y1="657.0" x2="1442.0" y2="660.7" stroke="#ffff80" stroke-width="1" shape-rendering="auto"/><line x1="1447.8" y1="655.5" x2="1448.9" y2="658.9" stroke="#ffff80" stroke-width="1" shape-rendering="auto"/><line x1="1455.8" y1="655.0" x2="1455.9" y2="657.9" stroke="#ffff80" stroke-width="1" shape-rendering="auto"/><line x1="1463.8" y1="655.5" x2="1463.0" y2="657.9" stroke="#ffff80" stroke-width="1" shape-rendering="auto"/><line x1="1471.7" y1="657.0" x2="1470.0" y2="658.8" stroke="#ffff80" stroke-width="1" shape-rendering="auto"/><line x1="1479.4" y1="659.4" x2="1476.9" y2="660.5" stroke="#ffff80" stroke-width="1" shape-rendering="auto"/><line x1="1486.6" y1="662.8" x2="1483.5" y2="663.1" stroke="#ffff80" stroke-width="1" shape-rendering="auto"/><line x1="1493.3" y1="667.0" x2="1489.6" y2="666.5" stroke="#ffff80" stroke-width="1" shape-rendering="auto"/><line x1="1499.4" y1="672.0" x2="1495.3" y2="670.7" stroke="#ffff80" stroke-width="1" shape-rendering="auto"/><line x1="1504.7" y1="677.7" x2="1500.3" y2="675.6" stroke="#ffff80" stroke-width="1" shape-rendering="auto"/><line x1="1509.1" y1="684.0" x2="1504.6" y2="681.0" stroke="#ffff80" stroke-width="1" shape-rendering="auto"/><line x1="1512.7" y1="690.8" x2="1508.2" y2="687.0" stroke="#ffff80" stroke-width="1" shape-rendering="auto"/><line x1="1515.3" y1="698.0" x2="1510.9" y2="693.3" stroke="#ffff80" stroke-width="1" shape-rendering="auto"/><line x1="1516.9" y1="705.4" x2="1512.8" y2="700.0" stroke="#ffff80" stroke-width="1" shape-rendering="auto"/>
<rect x="1451" y="652" width="7" height="7" fill="#ffff99"/>
<rect x="1401" y="710" width="7" height="7" fill="#ffff99"/>
<rect x="1457" y="708" width="7" height="7" fill="#ffff99"/>
<rect x="1452" y="714" width="7" height="7" fill="#ffff99"/>
</svg></div>
</div></body></html>
